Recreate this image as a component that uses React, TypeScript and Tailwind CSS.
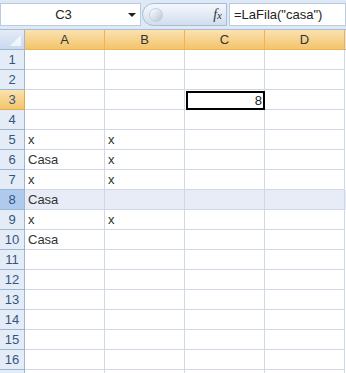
import React from "react";

const COLS = ["A", "B", "C", "D"];

// cell contents by row number
const DATA: Record<number, string[]> = {
  5: ["x", "x", "", ""],
  6: ["Casa", "x", "", ""],
  7: ["x", "x", "", ""],
  8: ["Casa", "", "", ""],
  9: ["x", "x", "", ""],
  10: ["Casa", "", "", ""],
};

function FormulaBar() {
  return (
    <div className="flex h-[30px] items-start bg-[#dfe8f5] pt-[3px] border-b border-[#a5bbd6]">
      {/* name box */}
      <div className="relative flex h-[23px] w-[141px] items-center justify-center bg-white border border-[#b8cbe2] text-[13px] text-[#222]">
        <span className="-ml-[14px]">C3</span>
        <span className="absolute right-[4px] top-[9px] h-0 w-0 border-x-[4px] border-t-[4px] border-x-transparent border-t-[#222]" />
      </div>
      {/* pill button with fx */}
      <div className="ml-[1px] flex h-[23px] w-[85px] items-center rounded-l-full bg-gradient-to-b from-[#f4f8fd] via-[#e3ebf6] to-[#d2ddec] border border-[#a9bcd6]">
        <span className="ml-[6px] h-[14px] w-[14px] rounded-full bg-gradient-to-br from-[#ffffff] to-[#b7c4d6] border border-[#c5d0de]" />
        <span className="ml-auto mr-[4px] font-['Liberation_Serif',serif] text-[14px] italic text-[#333]">
          f<span className="text-[11px]">x</span>
        </span>
      </div>
      {/* formula text */}
      <div className="ml-[2px] flex h-[23px] flex-1 items-center bg-white border border-[#b8cbe2] pl-[4px] text-[13px] text-[#222]">
        =LaFila("casa")
      </div>
    </div>
  );
}

function HeaderRow() {
  return (
    <div className="flex h-[20px]">
      <div className="relative h-[20px] w-[25px] bg-gradient-to-b from-[#e4ecf7] to-[#c9d9ee] border-r border-b border-[#9eb6ce]">
        <span className="absolute bottom-[3px] right-[3px] h-0 w-0 border-l-[11px] border-l-transparent [border-bottom:11px_solid_#ffffff] opacity-70" />
      </div>
      {COLS.map((c) => (
        <div
          key={c}
          className="flex h-[20px] w-[80px] items-center justify-center bg-gradient-to-b from-[#fbe2b0] to-[#f2c46a] border-r border-b border-[#f0b352] text-[13px] text-[#333]"
        >
          {c}
        </div>
      ))}
      <div className="h-[20px] flex-1 bg-[#dfe8f5] border-b border-[#9eb6ce]" />
    </div>
  );
}

function GridRow({ n, label = true }: { n: number; label?: boolean }) {
  const values = DATA[n] ?? ["", "", "", ""];
  const isActive = n === 3;
  const isMarked = n === 8;
  const headerClass = isActive
    ? "bg-gradient-to-b from-[#fbe2b0] to-[#f2c46a] border-[#e3a94b]"
    : isMarked
      ? "bg-[#aecbef] border-[#9eb6ce]"
      : "bg-[#e4ecf7] border-[#9eb6ce]";
  return (
    <div className="flex h-[20px]">
      <div
        className={`flex h-[20px] w-[25px] items-center justify-center border-r border-b text-[13px] text-[#36557d] ${headerClass}`}
      >
        {label ? n : ""}
      </div>
      {values.map((v, i) => (
        <div
          key={i}
          className={`relative flex h-[20px] w-[80px] items-center border-r border-b border-[#d0d7e5] pl-[3px] text-[13px] text-[#333] ${
            isMarked ? "bg-[#e8ecf7]" : "bg-white"
          }`}
        >
          {v}
          {isActive && i === 2 && (
            <div className="absolute left-[1px] top-[1px] flex h-[19px] w-[79px] items-center justify-end border-2 border-black pr-[1px] text-[13px] text-[#222]">
              8
            </div>
          )}
        </div>
      ))}
      <div className={`h-[20px] flex-1 ${isMarked ? "bg-[#e8ecf7]" : "bg-white"}`} />
    </div>
  );
}

export default function App() {
  const rows = Array.from({ length: 16 }, (_, i) => i + 1);
  return (
    <div className="h-[373px] w-[346px] overflow-hidden bg-white font-['Liberation_Sans',Arial,sans-serif]">
      <FormulaBar />
      <HeaderRow />
      {rows.map((n) => (
        <GridRow key={n} n={n} />
      ))}
      {/* next row, only its top edge is visible */}
      <GridRow n={17} label={false} />
    </div>
  );
}
